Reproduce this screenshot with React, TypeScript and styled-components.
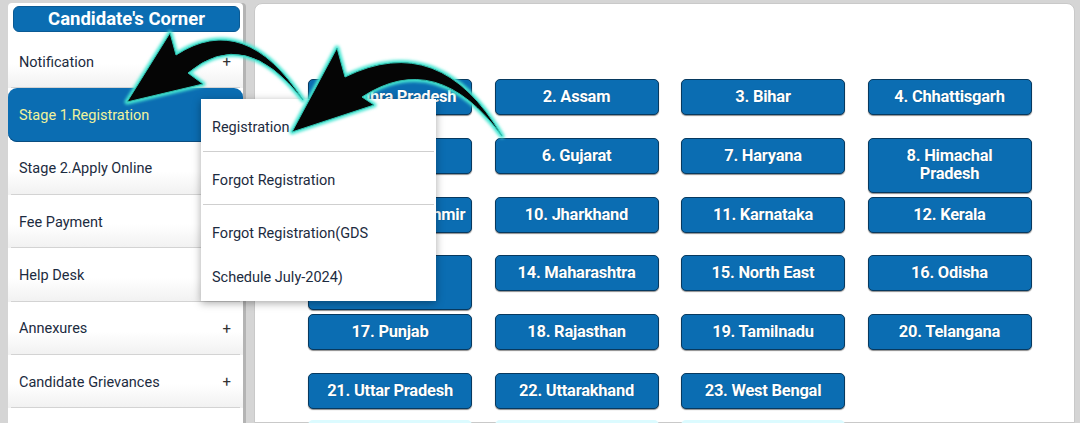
import React from "react";
import styled, { createGlobalStyle } from "styled-components";

const Global = createGlobalStyle`
  html, body { margin: 0; padding: 0; }
  body {
    background: #d5d5d5;
    font-family: Roboto, "Noto Sans", "Liberation Sans", sans-serif;
    width: 1080px;
    height: 423px;
    overflow: hidden;
  }
  * { box-sizing: border-box; }
`;

const Page = styled.div`
  position: relative;
  display: flex;
  gap: 11px;
  padding: 3px 0 0 8px;
  height: 423px;
  overflow: hidden;
`;

const Sidebar = styled.aside`
  width: 235px;
  flex: none;
  background: #ffffff;
  border-radius: 4px 4px 0 0;
  padding-top: 3px;
  box-shadow: 3px 0 0 #b4b4b4;
`;

const Header = styled.div`
  margin: 0 3px 3px 5px;
  height: 26px;
  border-radius: 6px;
  background: #0b6db2;
  border: 1px solid #0a5a94;
  color: #fff;
  font-weight: 700;
  font-size: 18.5px;
  display: flex;
  align-items: center;
  justify-content: center;
`;

const MenuList = styled.ul`
  list-style: none;
  margin: 0;
  padding: 0;
`;

const MenuItem = styled.li<{ $active?: boolean }>`
  position: relative;
  height: 53.33px;
  display: flex;
  align-items: center;
  justify-content: space-between;
  padding: 1px 12px 0 11px;
  font-size: 14.5px;
  color: ${(p) => (p.$active ? "#f1f39c" : "#1c2b40")};
  background: ${(p) =>
    p.$active ? "#0b6db2" : "linear-gradient(#ffffff 55%, #f1f1f1)"};
  border-radius: ${(p) => (p.$active ? "9px" : "0")};
  box-shadow: ${(p) => (p.$active ? "inset 0 -1px 0 #0a4d80" : "none")};
  &::after {
    content: "";
    position: absolute;
    left: 3px;
    right: 3px;
    bottom: 0;
    height: 1px;
    background: ${(p) => (p.$active ? "transparent" : "#d3d3d3")};
  }
`;

const Plus = styled.span`
  font-size: 15px;
  color: #333;
`;

const Dropdown = styled.div`
  position: absolute;
  left: 193px;
  top: 11px;
  width: 235px;
  background: #fff;
  box-shadow: 0 2px 8px rgba(0, 0, 0, 0.35);
  z-index: 5;
  color: #1c2b40;
  font-size: 14.5px;
`;

const DropItem = styled.div<{ $last?: boolean }>`
  height: ${(p) => (p.$last ? "auto" : "53px")};
  display: flex;
  align-items: center;
  padding: ${(p) => (p.$last ? "7px 9px 1px" : "6px 9px 0")};
  line-height: 44px;
  border-bottom: ${(p) => (p.$last ? "none" : "1px solid #cfcfcf")};
  white-space: pre-line;
  margin: 0 2px;
`;

const Main = styled.main`
  width: 821px;
  flex: none;
  background: #fff;
  border-radius: 8px 8px 0 0;
  border: 1px solid #c9c9c9;
  padding: 75px 0 0 53px;
`;

const Grid = styled.div`
  display: grid;
  grid-template-columns: repeat(4, 164px);
  grid-auto-rows: 36px;
  column-gap: 22.5px;
  row-gap: 22.8px;
  align-items: start;
`;

const StateButton = styled.button<{ $tall?: boolean }>`
  height: ${(p) => (p.$tall ? "55px" : "36px")};
  background: #0b6db2;
  border: 1px solid #07395f;
  border-radius: 5px;
  box-shadow: 0 1px 1px rgba(0, 0, 0, 0.45);
  color: #fff;
  font-family: Roboto, "Liberation Sans", sans-serif;
  font-weight: 700;
  font-size: 16.5px;
  line-height: 18px;
  letter-spacing: -0.25px;
  white-space: pre-line;
  padding: 0 4px;
  text-shadow: 0 0 1px rgba(0, 0, 0, 0.4);
`;

const NextRow = styled.div`
  display: grid;
  grid-template-columns: repeat(4, 164px);
  column-gap: 22.5px;
  margin-top: 11px;
`;

const GhostButton = styled.div`
  height: 36px;
  background: #dcfbff;
  border-radius: 5px;
`;

const Overlay = styled.svg`
  position: absolute;
  left: 0;
  top: 0;
  pointer-events: none;
  z-index: 10;
`;

const menu = [
  { label: "Notification", plus: true },
  { label: "Stage 1.Registration", active: true },
  { label: "Stage 2.Apply Online" },
  { label: "Fee Payment" },
  { label: "Help Desk" },
  { label: "Annexures", plus: true },
  { label: "Candidate Grievances", plus: true },
];

const states = [
  "1. Andhra Pradesh",
  "2. Assam",
  "3. Bihar",
  "4. Chhattisgarh",
  "5. Delhi",
  "6. Gujarat",
  "7. Haryana",
  "8. Himachal\nPradesh",
  "9. Jammu & Kashmir",
  "10. Jharkhand",
  "11. Karnataka",
  "12. Kerala",
  "13. Madhya\nPradesh",
  "14. Maharashtra",
  "15. North East",
  "16. Odisha",
  "17. Punjab",
  "18. Rajasthan",
  "19. Tamilnadu",
  "20. Telangana",
  "21. Uttar Pradesh",
  "22. Uttarakhand",
  "23. West Bengal",
];

const arrow1 =
  "M 127 102 L 170 33 L 176 55 Q 245 10 303 100 Q 245 25 188 73 L 203 84 Z";
const arrow2 =
  "M 292 132 L 337 48 L 345 77 Q 440 30 502 136 Q 437 48 362 97 L 374 105 Z";

export default function App() {
  return (
    <>
      <Global />
      <Page>
        <Sidebar>
          <Header>Candidate's Corner</Header>
          <MenuList>
            {menu.map((m) => (
              <MenuItem key={m.label} $active={m.active}>
                <span>{m.label}</span>
                {m.plus && <Plus>+</Plus>}
                {m.active && (
                  <Dropdown>
                    <DropItem>Registration</DropItem>
                    <DropItem>Forgot Registration</DropItem>
                    <DropItem $last>
                      {"Forgot Registration(GDS\nSchedule July-2024)"}
                    </DropItem>
                  </Dropdown>
                )}
              </MenuItem>
            ))}
          </MenuList>
        </Sidebar>
        <Main>
          <Grid>
            {states.map((s) => (
              <StateButton key={s} $tall={s.includes("\n")}>
                {s}
              </StateButton>
            ))}
          </Grid>
          <NextRow>
            <GhostButton />
            <GhostButton />
            <GhostButton />
          </NextRow>
        </Main>
        <Overlay width="1080" height="423" viewBox="0 0 1080 423">
          <defs>
            <filter id="glow" x="-20%" y="-20%" width="140%" height="140%">
              <feGaussianBlur stdDeviation="1.6" />
            </filter>
          </defs>
          {[arrow1, arrow2].map((d) => (
            <g key={d}>
              <path
                d={d}
                fill="#45e6d2"
                stroke="#45e6d2"
                strokeWidth="5"
                strokeLinejoin="round"
                filter="url(#glow)"
              />
              <path
                d={d}
                fill="#050505"
                stroke="#2fbfae"
                strokeWidth="1"
                strokeLinejoin="round"
              />
            </g>
          ))}
        </Overlay>
      </Page>
    </>
  );
}
